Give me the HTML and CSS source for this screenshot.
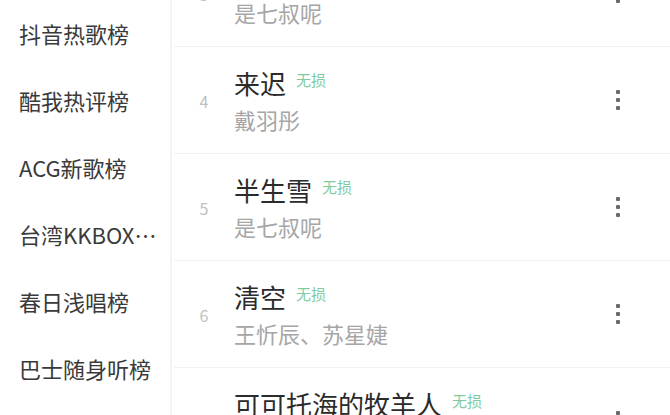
FILE: index.html
```html
<!DOCTYPE html>
<html lang="zh">
<head>
<meta charset="utf-8">
<link rel="stylesheet" href="styles.css">
</head>
<body>
<div class="app">
  <nav class="sidebar">
    <div class="cat">抖音热歌榜</div>
    <div class="cat">酷我热评榜</div>
    <div class="cat">ACG新歌榜</div>
    <div class="cat">台湾KKBOX音乐榜</div>
    <div class="cat">春日浅唱榜</div>
    <div class="cat">巴士随身听榜</div>
  </nav>
  <main class="list">
    <div class="row">
      <div class="rank">3</div>
      <div class="info">
        <div class="title">半生雪<span class="badge">无损</span></div>
        <div class="artist">是七叔呢</div>
      </div>
      <div class="more"><i></i><i></i><i></i></div>
    </div>
    <div class="row">
      <div class="rank">4</div>
      <div class="info">
        <div class="title">来迟<span class="badge">无损</span></div>
        <div class="artist">戴羽彤</div>
      </div>
      <div class="more"><i></i><i></i><i></i></div>
    </div>
    <div class="row">
      <div class="rank">5</div>
      <div class="info">
        <div class="title">半生雪<span class="badge">无损</span></div>
        <div class="artist">是七叔呢</div>
      </div>
      <div class="more"><i></i><i></i><i></i></div>
    </div>
    <div class="row">
      <div class="rank">6</div>
      <div class="info">
        <div class="title">清空<span class="badge">无损</span></div>
        <div class="artist">王忻辰、苏星婕</div>
      </div>
      <div class="more"><i></i><i></i><i></i></div>
    </div>
    <div class="row">
      <div class="rank">7</div>
      <div class="info">
        <div class="title">可可托海的牧羊人<span class="badge">无损</span></div>
        <div class="artist">王琪</div>
      </div>
      <div class="more"><i></i><i></i><i></i></div>
    </div>
  </main>
</div>
</body>
</html>
```
FILE: styles.css
```css
html, body {
  margin: 0;
  padding: 0;
  background: #ffffff;
  overflow: hidden;
}
body {
  font-family: "Noto Sans CJK SC", "Noto Sans", sans-serif;
  width: 670px;
  height: 415px;
}
.app {
  display: flex;
  height: 415px;
  overflow: hidden;
}
.sidebar {
  width: 170px;
  flex: none;
  border-right: 2px solid #f4f4f4;
  display: flex;
  flex-direction: column;
}
.cat {
  height: 67px;
  flex: none;
  padding-left: 19px;
  font-size: 22px;
  line-height: 67px;
  color: #3a3a3a;
  width: 139px;
  overflow: hidden;
  white-space: nowrap;
  text-overflow: ellipsis;
}
.list {
  flex: 1;
  display: flex;
  flex-direction: column;
  margin-top: -60px;
  padding-left: 2px;
}
.row {
  height: 106px;
  flex: none;
  display: flex;
  align-items: center;
  border-bottom: 1px solid #f1f1f1;
}
.rank {
  width: 60px;
  flex: none;
  text-align: center;
  font-size: 16px;
  color: #c0c0c0;
  padding-top: 2px;
}
.info {
  flex: 1;
  display: flex;
  flex-direction: column;
  gap: 6px;
}
.title {
  font-size: 26px;
  line-height: 32px;
  color: #2b2b2b;
  display: flex;
  align-items: flex-start;
}
.badge {
  font-size: 15px;
  line-height: 20px;
  color: #80cc9f;
  margin-left: 10px;
  margin-top: 3px;
}
.artist {
  font-size: 22px;
  line-height: 29px;
  color: #a6a6a6;
}
.more {
  width: 24px;
  flex: none;
  margin-right: 40px;
  display: flex;
  flex-direction: column;
  align-items: center;
  gap: 4px;
}
.more i {
  width: 4px;
  height: 4px;
  background: #6a6a6a;
  border-radius: 1px;
}
```
